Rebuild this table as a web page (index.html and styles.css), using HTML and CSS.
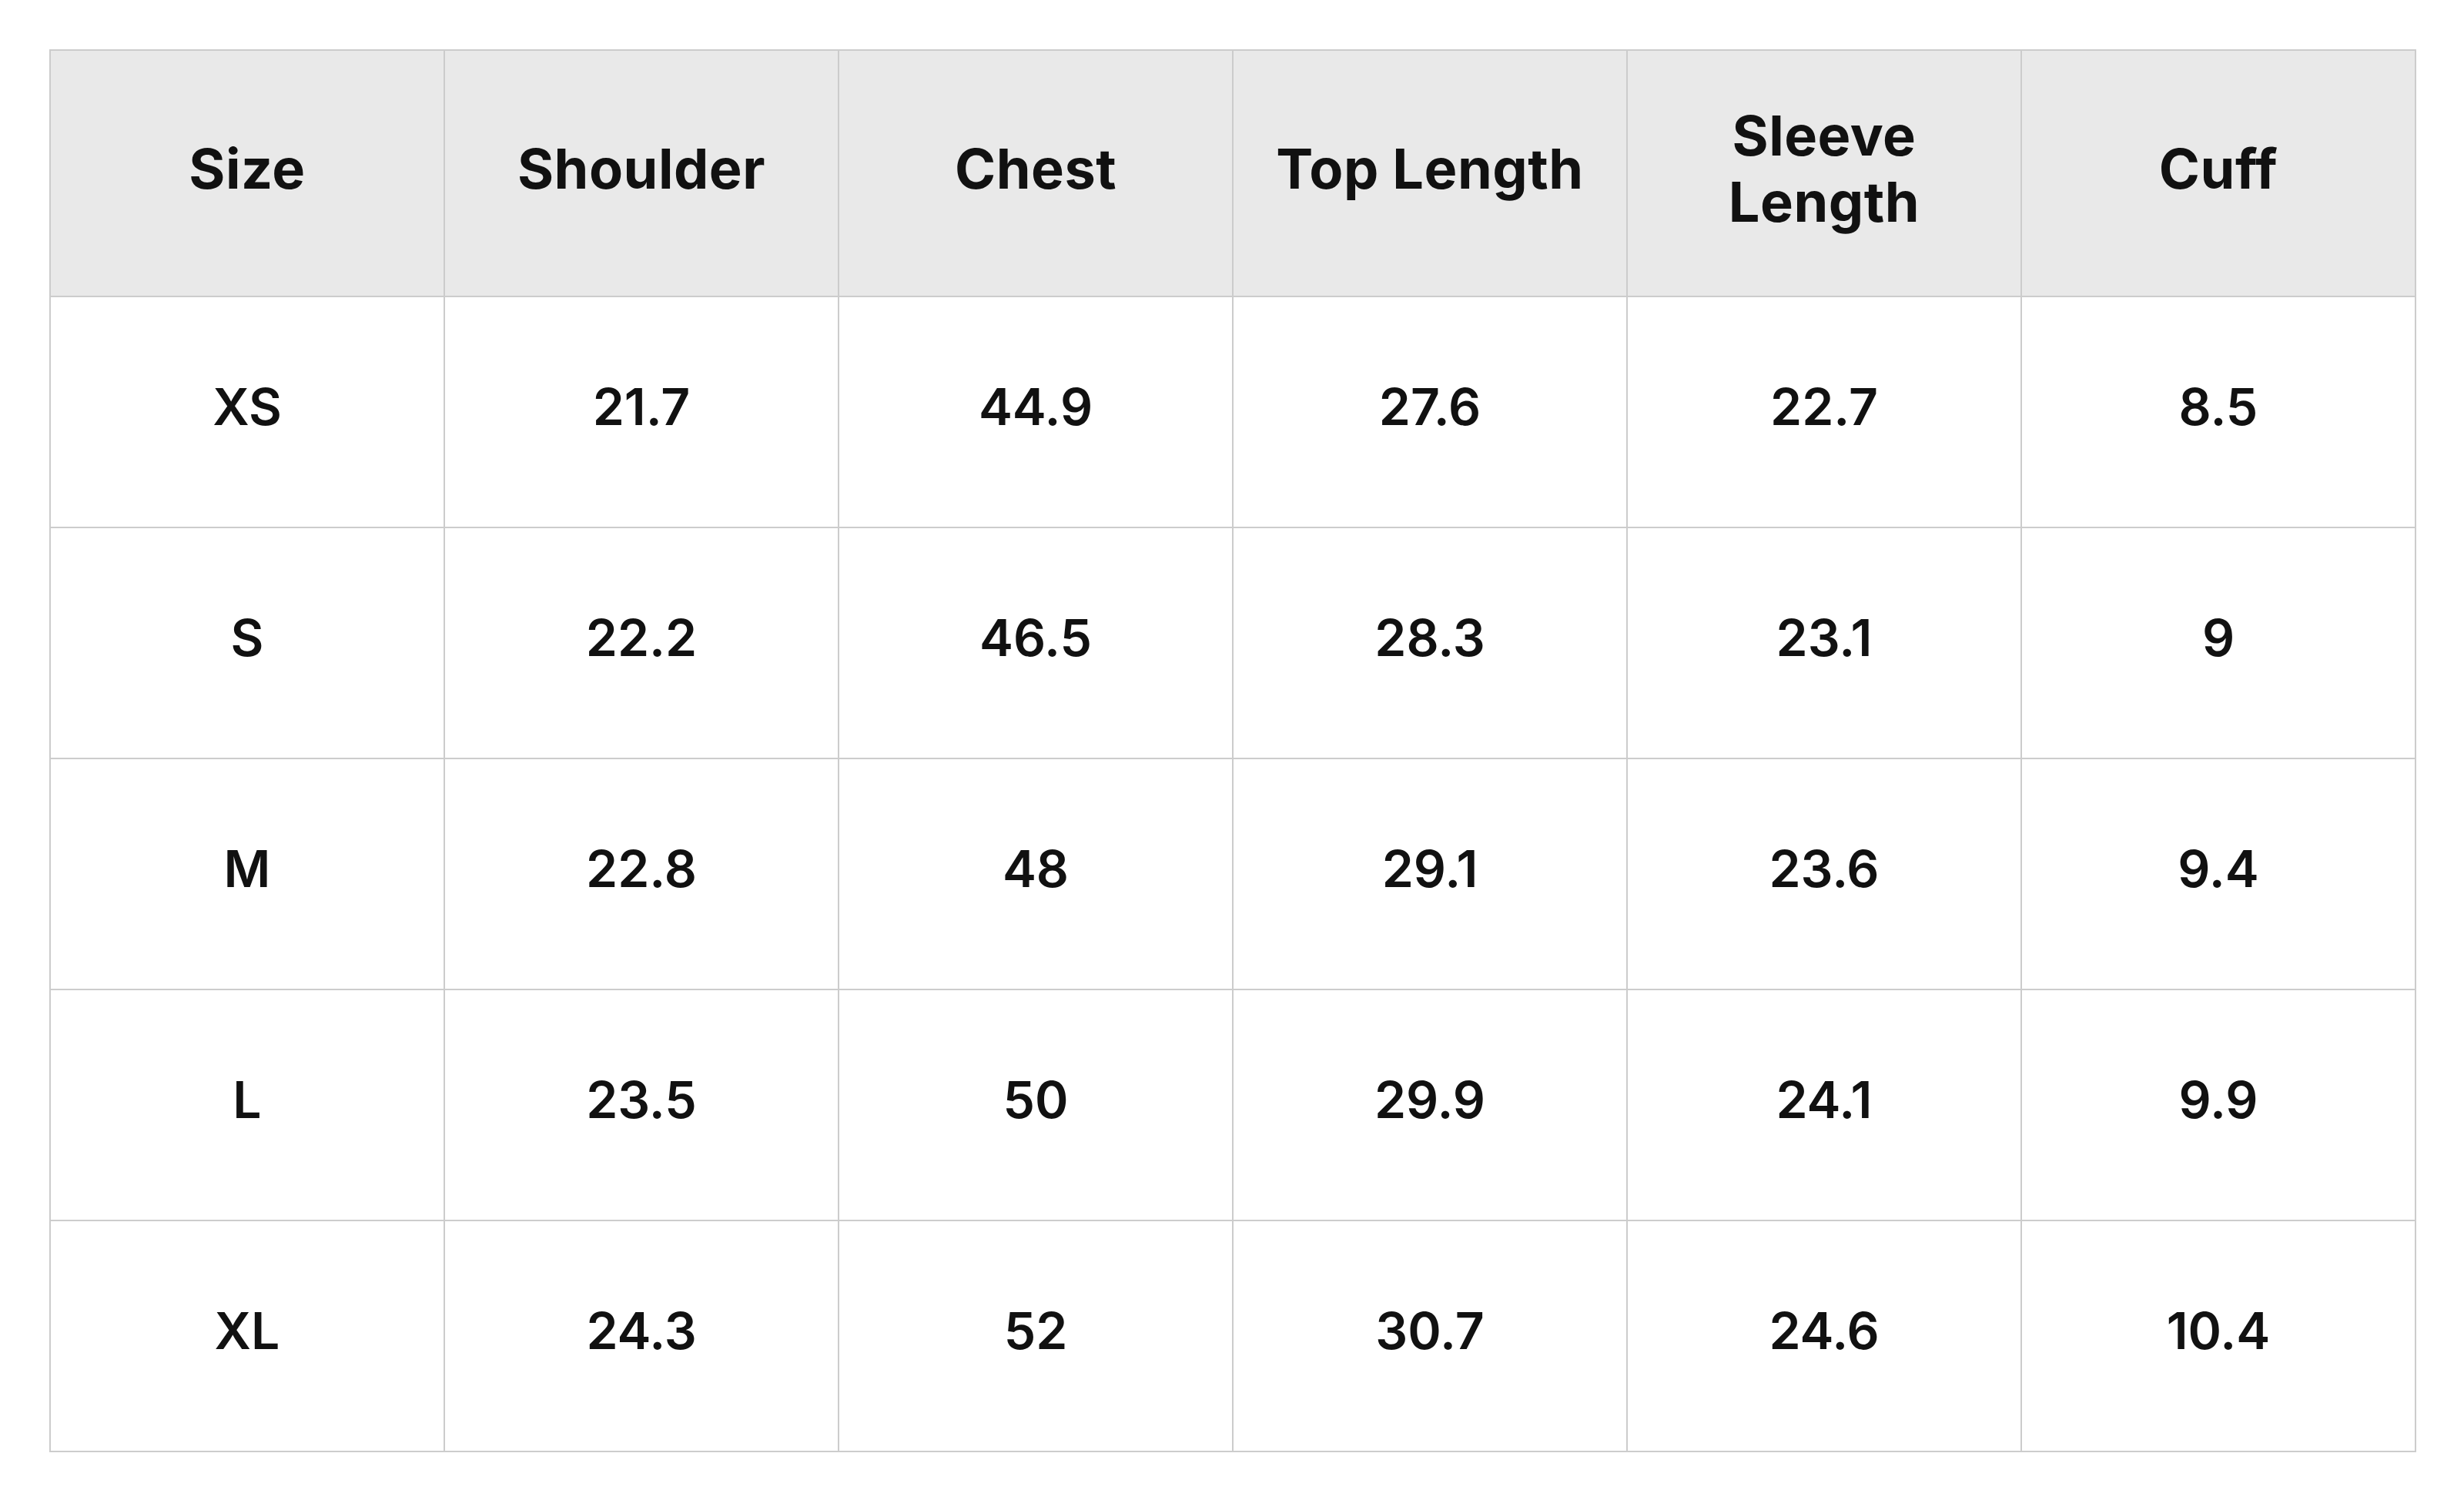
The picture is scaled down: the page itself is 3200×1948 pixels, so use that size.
FILE: index.html
```html
<!DOCTYPE html>
<html lang="en">
<head>
<meta charset="utf-8">
<title>Size chart</title>
<link rel="stylesheet" href="styles.css">
</head>
<body>
<div class="wrap">
<table class="size-table">
  <colgroup>
    <col class="col"><col class="col"><col class="col"><col class="col"><col class="col"><col class="col">
  </colgroup>
  <thead>
    <tr>
      <th>Size</th>
      <th>Shoulder</th>
      <th>Chest</th>
      <th>Top Length</th>
      <th>Sleeve Length</th>
      <th>Cuff</th>
    </tr>
  </thead>
  <tbody>
    <tr><td>XS</td><td>21.7</td><td>44.9</td><td>27.6</td><td>22.7</td><td>8.5</td></tr>
    <tr><td>S</td><td>22.2</td><td>46.5</td><td>28.3</td><td>23.1</td><td>9</td></tr>
    <tr><td>M</td><td>22.8</td><td>48</td><td>29.1</td><td>23.6</td><td>9.4</td></tr>
    <tr><td>L</td><td>23.5</td><td>50</td><td>29.9</td><td>24.1</td><td>9.9</td></tr>
    <tr><td>XL</td><td>24.3</td><td>52</td><td>30.7</td><td>24.6</td><td>10.4</td></tr>
  </tbody>
</table>
</div>
</body>
</html>
```

FILE: styles.css
```css
html, body {
  margin: 0;
  padding: 0;
  background: #ffffff;
}

.wrap {
  padding: 64px 62px 64px 64px;
}

.size-table {
  border-collapse: collapse;
  table-layout: fixed;
  width: 3074px;
  font-family: Inter, "Noto Sans", sans-serif;
  color: #111111;
}

.size-table .col {
  width: 512px;
}

.size-table th,
.size-table td {
  border: 2px solid #cccccc;
  text-align: center;
  vertical-align: middle;
  padding: 0 32px 12px 32px;
}

.size-table th {
  background: #e9e9e9;
  height: 306px;
  font-size: 72px;
  font-weight: 700;
  line-height: 86px;
  letter-spacing: 0.5px;
}

.size-table td {
  height: 286px;
  font-size: 66px;
  font-weight: 600;
  line-height: 1.2;
}
```
